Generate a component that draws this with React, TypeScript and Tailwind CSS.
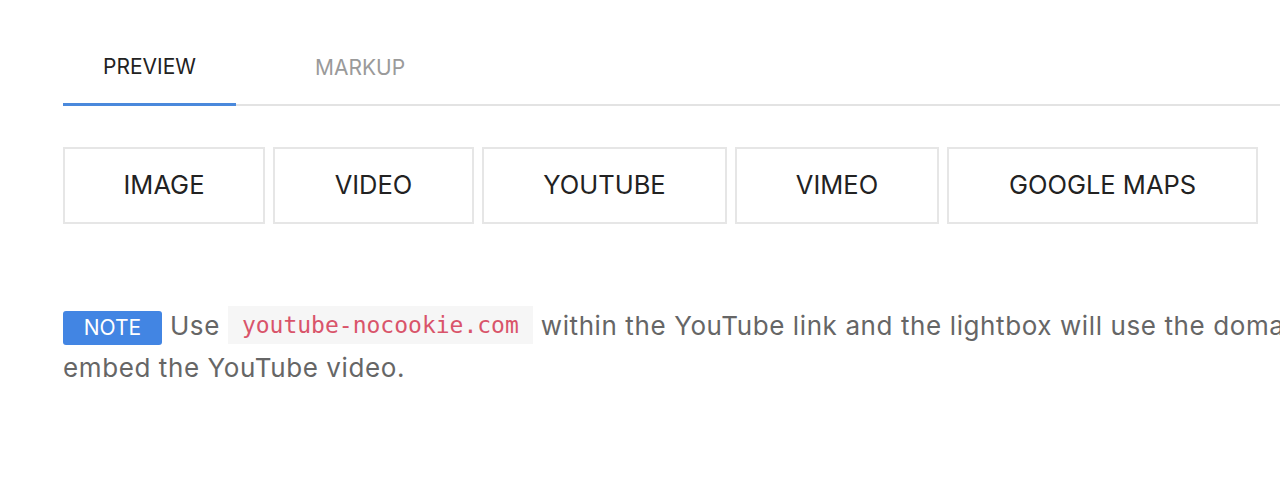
import React from "react";

const tabs = ["PREVIEW", "MARKUP"];
const buttons = [
  { label: "IMAGE", w: "w-[202px]" },
  { label: "VIDEO", w: "w-[201px]" },
  { label: "YOUTUBE", w: "w-[245px]" },
  { label: "VIMEO", w: "w-[204px]" },
  { label: "GOOGLE MAPS", w: "w-[311px]" },
];

export default function App() {
  return (
    <div className="w-[1280px] h-[500px] overflow-hidden bg-white font-['Inter','Lato',sans-serif]">
      <div className="w-[1400px] pl-[63px] pt-[30px]">
        <div className="flex gap-[39px] border-b-2 border-[#e3e3e3]">
          {tabs.map((t, i) => (
            <div
              key={t}
              className={
                i === 0
                  ? "h-[76px] -mb-[2px] px-10 flex items-center border-b-[3px] border-[#4a89dc] text-[21px] text-[#222]"
                  : "h-[76px] -mb-[2px] px-10 flex items-center text-[21px] text-[#9a9a9a]"
              }
            >
              {t}
            </div>
          ))}
        </div>

        <div className="flex gap-2 mt-[41px]">
          {buttons.map((b) => (
            <div
              key={b.label}
              className={`${b.w} h-[77px] flex items-center justify-center border-2 border-[#e6e6e6] text-[25.5px] text-[#222]`}
            >
              {b.label}
            </div>
          ))}
        </div>

        <p className="mt-[81px] text-[26px] leading-[42px] tracking-[0.6px] text-[#666] whitespace-nowrap">
          <span className="inline-block bg-[#4285e3] text-white text-[21px] leading-[34px] w-[99px] text-center rounded-[3px] tracking-normal">
            NOTE
          </span>{" "}
          Use{" "}
          <code className="inline-block bg-[#f6f6f6] text-[#d9546a] font-['DejaVu_Sans_Mono','Liberation_Mono',monospace] text-[23px] leading-[38px] px-[14px] tracking-normal align-[2px]">
            youtube-nocookie.com
          </code>{" "}
          within the YouTube link and the lightbox will use the domain to
          <br />
          embed the YouTube video.
        </p>
      </div>
    </div>
  );
}
